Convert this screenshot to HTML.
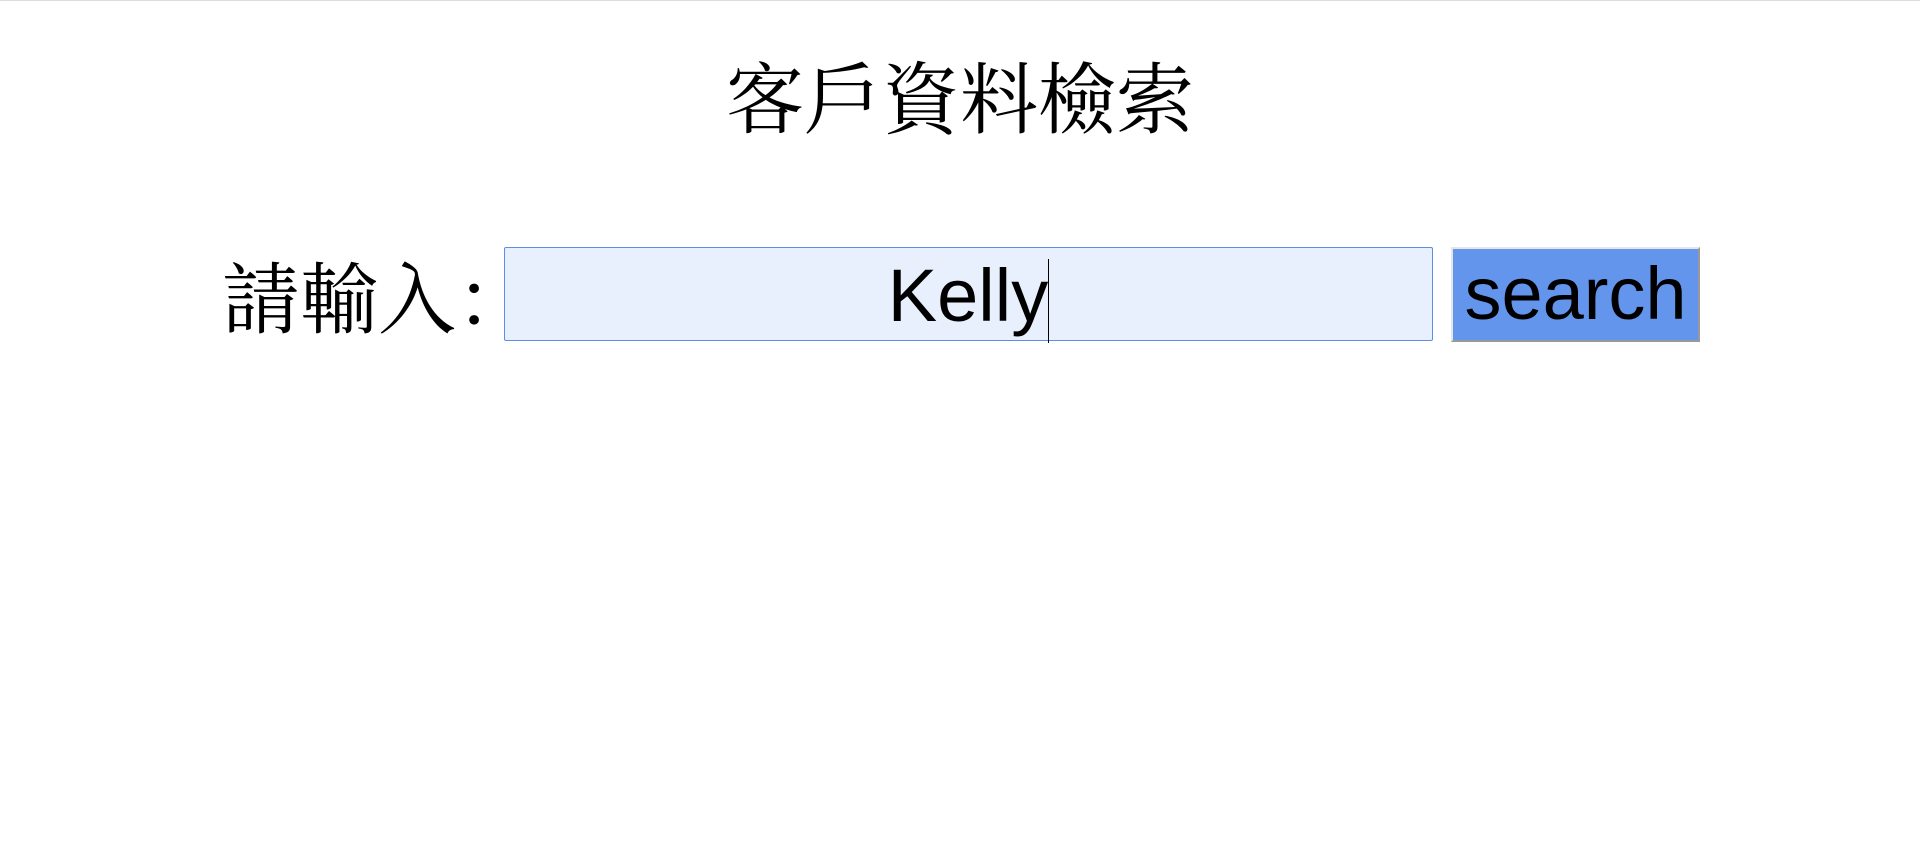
<!DOCTYPE html>
<html><head><meta charset="utf-8"><style>
html,body{margin:0;padding:0;background:#fff;width:1920px;height:857px;overflow:hidden;position:relative}
.top{position:absolute;left:0;top:0;width:1920px;height:1px;background:#dadce0}
.t{position:absolute;left:0;width:1920px;top:51px;text-align:center;font:78px/100px "Liberation Serif","Noto Serif CJK SC",serif;color:#000}
.l{position:absolute;left:222px;top:251px;font:78px/100px "Liberation Serif","Noto Serif CJK SC",serif;color:#000;white-space:nowrap}
.in{position:absolute;left:504px;top:247px;width:929px;height:94px;box-sizing:border-box;border:1px solid #5b8ee6;border-radius:2px;background:#e8f0fe;text-align:center;font:74px/96px "Liberation Sans",Arial,sans-serif;color:#000}
.cur{display:inline-block;width:1px;height:84px;background:#000;vertical-align:-22px}
.b{position:absolute;left:1451px;top:247px;width:249px;height:95px;box-sizing:border-box;background:#6495ed;border:2px solid;border-color:#e6e6e6 #999 #999 #e6e6e6;font:74px/90px "Liberation Sans",Arial,sans-serif;color:#000;text-align:center}
</style></head><body>
<div class="top"></div>
<div class="t">客戶資料檢索</div>
<div class="l">請輸入：</div>
<div class="in">Kelly<span class="cur"></span></div>
<div class="b">search</div>
</body></html>
